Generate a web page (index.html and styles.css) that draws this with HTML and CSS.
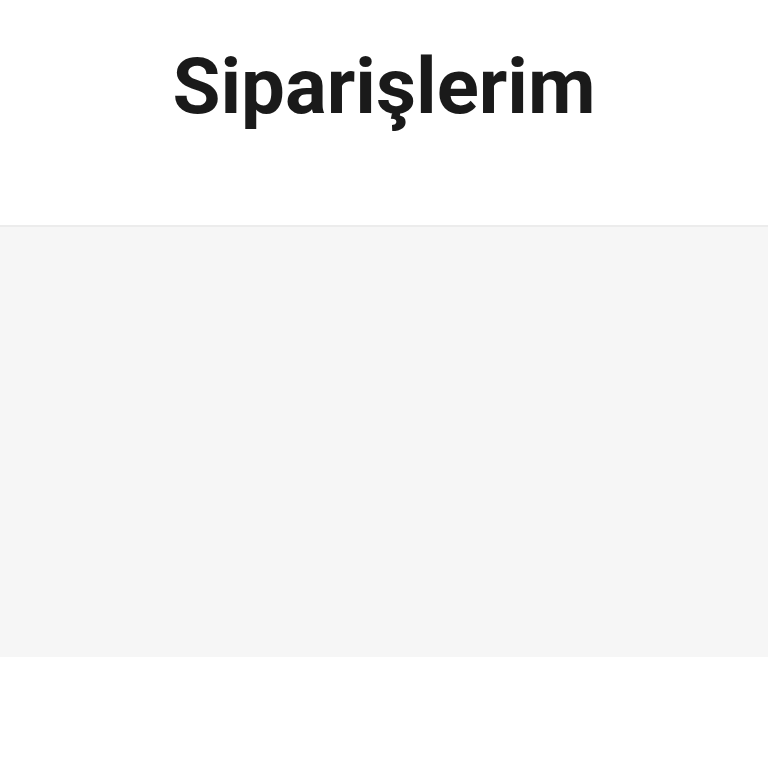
FILE: index.html
```html
<!DOCTYPE html>
<html lang="tr">
<head>
<meta charset="utf-8">
<link rel="stylesheet" href="styles.css">
</head>
<body>
<header class="header">
  <h1 class="title">Siparişlerim</h1>
</header>
<main class="content"></main>
</body>
</html>
```
FILE: styles.css
```css
html, body {
  margin: 0;
  padding: 0;
  background: #ffffff;
  font-family: Roboto, "Noto Sans", sans-serif;
}
.header {
  display: flex;
  justify-content: center;
  align-items: flex-start;
  border-bottom: 2px solid #ececec;
  box-sizing: border-box;
  height: 227px;
}
.title {
  margin: 0;
  padding-top: 41px;
  font-size: 78px;
  line-height: 92px;
  font-weight: 700;
  color: #1a1a1a;
}
.content {
  height: 430px;
  background: #f6f6f6;
}
```
